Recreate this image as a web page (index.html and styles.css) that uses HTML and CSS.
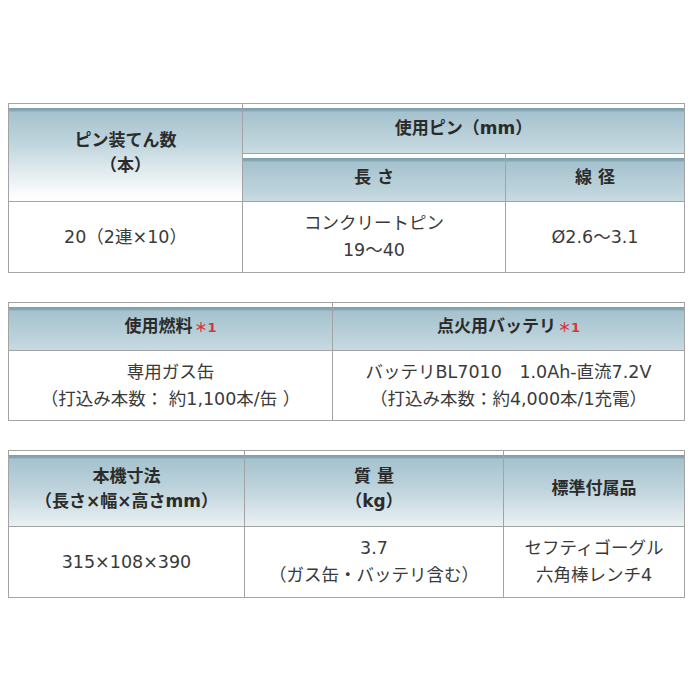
FILE: index.html
```html
<!DOCTYPE html>
<html lang="ja">
<head>
<meta charset="utf-8">
<link rel="stylesheet" href="styles.css">
</head>
<body>
<div class="page">
  <table class="spec t1">
    <colgroup><col class="c1a"><col class="c1b"><col class="c1c"></colgroup>
    <tr class="h1">
      <th rowspan="2">ピン装てん数<br>（本）</th>
      <th colspan="2">使用ピン（mm）</th>
    </tr>
    <tr class="h2">
      <th class="sp">長 さ</th>
      <th class="sp">線 径</th>
    </tr>
    <tr class="b1">
      <td>20（2連×10）</td>
      <td>コンクリートピン<br>19～40</td>
      <td>Ø2.6～3.1</td>
    </tr>
  </table>

  <table class="spec t2">
    <colgroup><col class="c2a"><col class="c2b"></colgroup>
    <tr class="h3">
      <th>使用燃料<span class="note">＊1</span></th>
      <th>点火用バッテリ<span class="note">＊1</span></th>
    </tr>
    <tr class="b2">
      <td>専用ガス缶<br>（打込み本数： 約1,100本/缶 ）</td>
      <td>バッテリBL7010　1.0Ah-直流7.2V<br>（打込み本数：約4,000本/1充電）</td>
    </tr>
  </table>

  <table class="spec t3">
    <colgroup><col class="c3a"><col class="c3b"><col class="c3c"></colgroup>
    <tr class="h4">
      <th>本機寸法<br>（長さ×幅×高さmm）</th>
      <th>質 量<br>（kg）</th>
      <th>標準付属品</th>
    </tr>
    <tr class="b3">
      <td>315×108×390</td>
      <td>3.7<br>（ガス缶・バッテリ含む）</td>
      <td>セフティゴーグル<br>六角棒レンチ4</td>
    </tr>
  </table>
</div>
</body>
</html>
```
FILE: styles.css
```css
html, body {
  margin: 0;
  padding: 0;
  background: #ffffff;
}

.page {
  padding: 103px 0 0 8px;
  display: flex;
  flex-direction: column;
  gap: 29px;
  font-family: "DejaVu Sans", "Noto Sans CJK JP", sans-serif;
  color: #333333;
}

.spec {
  border-collapse: collapse;
  width: 677px;
  table-layout: fixed;
  border: 1px solid #a3a3a3;
}

.spec th,
.spec td {
  border: 1px solid #a3a3a3;
  padding: 0;
  text-align: center;
  vertical-align: middle;
}

.spec th {
  font-size: 17px;
  font-weight: bold;
  line-height: 25px;
  color: #2b2b2b;
  background-color: #ffffff;
  background-image: linear-gradient(to bottom,
    #ffffff 0px, #ffffff 4px,
    #7a9fab 4px, #88aab5 7px,
    #a5c2ce 8px, #c0d5dd 40px,
    #e4edf0 70px, #fbfcfd 90px, #ffffff 100px);
  background-repeat: no-repeat;
  background-size: 100% 100px;
}

.spec td {
  font-size: 17.5px;
  line-height: 27px;
  color: #3a3a3a;
}

.sp {
  letter-spacing: 0;
}

.note {
  color: #d8343c;
  font-size: 13px;
  font-weight: bold;
  margin-left: 2px;
}

.c1a { width: 234px; }
.c1b { width: 263px; }
.c1c { width: auto; }

.c2a { width: 324px; }
.c2b { width: auto; }

.c3a { width: 236px; }
.c3b { width: 259px; }
.c3c { width: auto; }

.h1 { height: 50px; }
.h2 { height: 48px; }
.b1 { height: 71px; }

.h3 { height: 48px; }
.b2 { height: 70px; }

.h4 { height: 76px; }
.b3 { height: 71px; }
```
